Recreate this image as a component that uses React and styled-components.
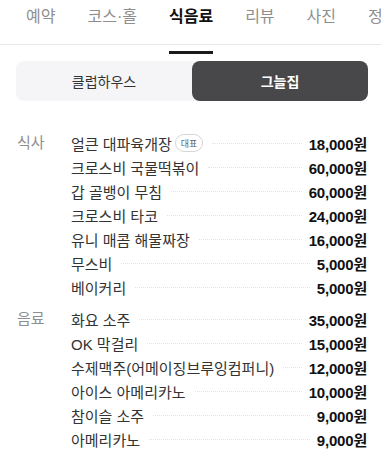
import React from 'react';
import styled, { createGlobalStyle } from 'styled-components';

const GlobalStyle = createGlobalStyle`
  body {
    margin: 0;
    background: #fff;
    font-family: "Liberation Sans", "Noto Sans CJK KR", sans-serif;
    color: #222;
  }
`;

const Page = styled.div`
  width: 381px;
  height: 464px;
  overflow: hidden;
`;

const TabBar = styled.div`
  display: flex;
  height: 44px;
  border-bottom: 1px solid #e8e8e8;
  padding-left: 26px;
  gap: 32px;
  white-space: nowrap;
`;

const Tab = styled.div`
  position: relative;
  font-size: 16px;
  line-height: 34px;
  color: ${(p) => (p.$active ? '#111' : '#8e8e8e')};
  font-weight: ${(p) => (p.$active ? 700 : 400)};
  &::after {
    content: '';
    display: ${(p) => (p.$active ? 'block' : 'none')};
    position: absolute;
    left: 0;
    right: 0;
    bottom: -10px;
    height: 3px;
    background: #1a1a1a;
  }
`;

const Segment = styled.div`
  display: flex;
  margin: 16px 13px 0 16px;
  height: 40px;
  border-radius: 8px;
  background: #f5f5f7;
`;

const SegButton = styled.div`
  flex: 1;
  display: flex;
  align-items: center;
  justify-content: center;
  border-radius: 8px;
  font-size: 14px;
  background: ${(p) => (p.$active ? '#48484a' : 'transparent')};
  color: ${(p) => (p.$active ? '#fff' : '#333')};
  font-weight: ${(p) => (p.$active ? 700 : 400)};
`;

const Menu = styled.div`
  padding: 30px 14px 0 17px;
`;

const Group = styled.div`
  display: flex;
  margin-bottom: 8px;
`;

const Category = styled.div`
  width: 54px;
  flex-shrink: 0;
  font-size: 15px;
  line-height: 24px;
  color: #8e8e8e;
`;

const Items = styled.div`
  flex: 1;
  min-width: 0;
`;

const Row = styled.div`
  display: flex;
  align-items: center;
  height: 24px;
  font-size: 15px;
`;

const Name = styled.span`
  color: #333;
  white-space: nowrap;
  display: flex;
  align-items: center;
`;

const Badge = styled.span`
  display: inline-flex;
  align-items: center;
  justify-content: center;
  margin-left: 3px;
  height: 16px;
  padding: 0 5px;
  border: 1px solid #d6d6d6;
  border-radius: 9px;
  font-size: 9px;
  color: #666;
`;

const Leader = styled.span`
  flex: 1;
  margin: 0 7px 0 9px;
  border-bottom: 1px dotted #e2e2e2;
  height: 0;
`;

const Price = styled.span`
  font-weight: 700;
  color: #111;
  white-space: nowrap;
  letter-spacing: -0.2px;
`;

const menu = [
  {
    category: '식사',
    items: [
      ['얼큰 대파육개장', '18,000원', true],
      ['크로스비 국물떡볶이', '60,000원'],
      ['갑 골뱅이 무침', '60,000원'],
      ['크로스비 타코', '24,000원'],
      ['유니 매콤 해물짜장', '16,000원'],
      ['무스비', '5,000원'],
      ['베이커리', '5,000원'],
    ],
  },
  {
    category: '음료',
    items: [
      ['화요 소주', '35,000원'],
      ['OK 막걸리', '15,000원'],
      ['수제맥주(어메이징브루잉컴퍼니)', '12,000원'],
      ['아이스 아메리카노', '10,000원'],
      ['참이슬 소주', '9,000원'],
      ['아메리카노', '9,000원'],
    ],
  },
];

const tabs = ['예약', '코스·홀', '식음료', '리뷰', '사진', '정보'];

export default function App() {
  return (
    <Page>
      <GlobalStyle />
      <TabBar>
        {tabs.map((t) => (
          <Tab key={t} $active={t === '식음료'}>{t}</Tab>
        ))}
      </TabBar>
      <Segment>
        <SegButton>클럽하우스</SegButton>
        <SegButton $active>그늘집</SegButton>
      </Segment>
      <Menu>
        {menu.map((g) => (
          <Group key={g.category}>
            <Category>{g.category}</Category>
            <Items>
              {g.items.map(([name, price, rep]) => (
                <Row key={name}>
                  <Name>
                    {name}
                    {rep && <Badge>대표</Badge>}
                  </Name>
                  <Leader />
                  <Price>{price}</Price>
                </Row>
              ))}
            </Items>
          </Group>
        ))}
      </Menu>
    </Page>
  );
}
